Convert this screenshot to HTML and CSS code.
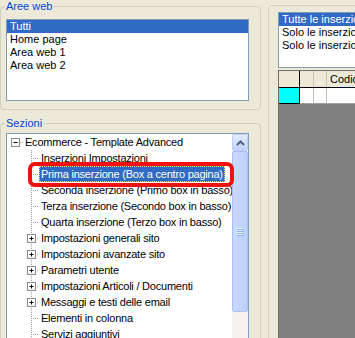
FILE: index.html
```html
<!DOCTYPE html>
<html lang="it">
<head>
<meta charset="UTF-8">
<meta name="viewport" content="width=device-width, initial-scale=1.0">
<title>Sezioni</title>
<link rel="stylesheet" href="styles.css">
</head>
<body>

<svg class="defs" width="0" height="0">
  <symbol id="root-minus" viewBox="0 0 16 16">
    <path d="M13 8.5H16" stroke="#a0a0a0" stroke-dasharray="1 1"/>
    <rect x="4.5" y="4.5" width="8" height="8" fill="#fff" stroke="#8a8a8a"/>
    <path d="M6.5 8.5H10.5" stroke="#000"/>
  </symbol>
  <symbol id="leaf" viewBox="0 0 16 16">
    <path d="M8.5 0V16M10 8.5H16" stroke="#a0a0a0" stroke-dasharray="1 1"/>
  </symbol>
  <symbol id="plus" viewBox="0 0 16 16">
    <path d="M8.5 0V16M10 8.5H16" stroke="#a0a0a0" stroke-dasharray="1 1"/>
    <rect x="4.5" y="4.5" width="8" height="8" fill="#fff" stroke="#8a8a8a"/>
    <path d="M6.5 8.5H10.5M8.5 6.5V10.5" stroke="#000"/>
  </symbol>
</svg>

<div class="window">
  <div class="left">
    <fieldset class="group group-web">
      <legend>Aree web</legend>
      <div class="listbox web-list">
        <div class="item selected">Tutti</div>
        <div class="item">Home page</div>
        <div class="item">Area web 1</div>
        <div class="item">Area web 2</div>
      </div>
    </fieldset>

    <fieldset class="group group-sections">
      <legend>Sezioni</legend>
      <div class="tree">
        <div class="tree-items">
          <div class="node"><svg class="twig"><use href="#root-minus"/></svg><span class="label">Ecommerce - Template Advanced</span></div>
          <div class="node child"><svg class="twig"><use href="#leaf"/></svg><span class="label">Inserzioni Impostazioni</span></div>
          <div class="node child"><svg class="twig"><use href="#leaf"/></svg><span class="label selected">Prima inserzione (Box a centro pagina)</span></div>
          <div class="node child"><svg class="twig"><use href="#leaf"/></svg><span class="label">Seconda inserzione (Primo box in basso)</span></div>
          <div class="node child"><svg class="twig"><use href="#leaf"/></svg><span class="label">Terza inserzione (Secondo box in basso)</span></div>
          <div class="node child"><svg class="twig"><use href="#leaf"/></svg><span class="label">Quarta inserzione (Terzo box in basso)</span></div>
          <div class="node child"><svg class="twig"><use href="#plus"/></svg><span class="label">Impostazioni generali sito</span></div>
          <div class="node child"><svg class="twig"><use href="#plus"/></svg><span class="label">Impostazioni avanzate sito</span></div>
          <div class="node child"><svg class="twig"><use href="#plus"/></svg><span class="label">Parametri utente</span></div>
          <div class="node child"><svg class="twig"><use href="#plus"/></svg><span class="label">Impostazioni Articoli / Documenti</span></div>
          <div class="node child"><svg class="twig"><use href="#plus"/></svg><span class="label">Messaggi e testi delle email</span></div>
          <div class="node child"><svg class="twig"><use href="#leaf"/></svg><span class="label">Elementi in colonna</span></div>
          <div class="node child"><svg class="twig"><use href="#leaf"/></svg><span class="label">Servizi aggiuntivi</span></div>
        </div>
        <div class="scrollbar">
          <div class="sb-up">
            <svg width="9" height="6" viewBox="0 0 9 6"><path d="M1 5L4.5 1.5L8 5" fill="none" stroke="#4d6185" stroke-width="2"/></svg>
          </div>
          <div class="sb-thumb">
            <svg width="8" height="8" viewBox="0 0 8 8">
              <path d="M0 0.5H7M0 2.5H7M0 4.5H7M0 6.5H7" stroke="#eef3fe"/>
              <path d="M1 1.5H8M1 3.5H8M1 5.5H8M1 7.5H8" stroke="#8cb0f8"/>
            </svg>
          </div>
          <div class="sb-track"></div>
        </div>
      </div>
    </fieldset>
  </div>

  <div class="right">
    <div class="listbox filter-list">
      <div class="item selected">Tutte le inserzioni</div>
      <div class="item">Solo le inserzioni attive</div>
      <div class="item">Solo le inserzioni non attive</div>
    </div>
    <div class="grid">
      <div class="grid-head">
        <div class="cell corner"></div>
        <div class="cell narrow"></div>
        <div class="cell narrow second"></div>
        <div class="cell wide">Codice</div>
      </div>
      <div class="grid-row">
        <div class="cell rowhead"></div>
        <div class="cell narrow"></div>
        <div class="cell narrow second"></div>
        <div class="cell wide"></div>
      </div>
    </div>
  </div>
</div>

<div class="callout"></div>

</body>
</html>
```

FILE: styles.css
```css
body {
  margin: 0;
  width: 355px;
  height: 338px;
  overflow: hidden;
  background-color: #ece9d8;
  font-family: "Liberation Sans", Arial, sans-serif;
  font-size: 11px;
  color: #000;
  position: relative;
}

.defs {
  position: absolute;
  width: 0;
  height: 0;
}

.window {
  display: flex;
  gap: 7px;
}

.left {
  width: 261px;
  flex-shrink: 0;
}

/* group boxes */
.group {
  margin: 0;
  border: 1px solid #d0d0bf;
  border-radius: 4px;
  min-inline-size: 0;
  box-sizing: border-box;
}

.group legend {
  color: #0046d5;
  line-height: 13px;
  padding: 0 1px;
  margin-left: -1px;
}

.group-web {
  height: 110px;
  padding: 6px 11px 8px 5px;
}

.group-sections {
  margin-top: 7px;
  height: 260px;
  padding: 3px 11px 0 5px;
}

/* list boxes */
.listbox {
  background-color: #fff;
  border: 1px solid #7f9db9;
  box-sizing: border-box;
}

.web-list {
  height: 82px;
}

.item {
  height: 13px;
  line-height: 13px;
  padding-left: 3px;
  white-space: nowrap;
}

.item.selected {
  background-color: #316ac5;
  color: #fff;
}

/* tree */
.tree {
  display: flex;
  height: 230px;
  background-color: #fff;
  border: 1px solid #7f9db9;
  box-sizing: border-box;
}

.tree-items {
  flex: 1;
  overflow: hidden;
}

.node {
  display: flex;
  height: 16px;
  white-space: nowrap;
}

.node.child {
  padding-left: 16px;
}

.twig {
  width: 16px;
  height: 16px;
  flex-shrink: 0;
}

.label {
  line-height: 16px;
  padding: 0 2px;
  letter-spacing: -0.22px;
}

.label.selected {
  background-color: #316ac5;
  color: #fff;
  outline: 1px dotted #e8d89a;
  outline-offset: -1px;
}

/* scrollbar */
.scrollbar {
  width: 16px;
  flex-shrink: 0;
  display: flex;
  flex-direction: column;
  background-color: #f5f4ee;
}

.sb-up {
  height: 17px;
  box-sizing: border-box;
  border: 1px solid #bccdf6;
  border-radius: 2px;
  background: linear-gradient(#e3ebfd, #c4d4fa);
  display: flex;
  align-items: center;
  justify-content: center;
}

.sb-thumb {
  height: 161px;
  box-sizing: border-box;
  border: 1px solid #a9c0f3;
  border-radius: 2px;
  background: linear-gradient(90deg, #cbd9fc, #bdd0fa);
  display: flex;
  align-items: center;
  justify-content: center;
}

.sb-track {
  flex: 1;
}

/* right panel */
.right {
  width: 200px;
  flex-shrink: 0;
  margin-top: 5px;
  height: 340px;
  border: 1px solid #d0d0bf;
  border-radius: 4px;
  padding: 6px 0 0 9px;
  box-sizing: border-box;
}

.filter-list {
  height: 56px;
  width: 240px;
}

.grid {
  margin-top: 2px;
  height: 280px;
  width: 240px;
  background-color: #808080;
  border-left: 1px solid #716f64;
  border-top: 1px solid #716f64;
}

.grid-head {
  display: flex;
  height: 17px;
  background-color: #ece9d8;
  border-bottom: 1px solid #000;
  box-sizing: border-box;
}

.grid-row {
  display: flex;
  height: 16px;
  background-color: #fff;
  box-sizing: border-box;
}

.cell {
  box-sizing: border-box;
  height: 100%;
}

.corner,
.rowhead {
  width: 21px;
  border-right: 1px solid #000;
}

.rowhead {
  background-color: #00ffff;
  border-bottom: 1px solid #000;
}

.narrow {
  width: 14px;
  border-right: 1px solid #c8c5b8;
}

.narrow.second {
  width: 13px;
}

.wide {
  width: 150px;
  padding-left: 3px;
  line-height: 16px;
}

.grid-row .wide,
.grid-row .narrow {
  border-bottom: 1px solid #a0a0a0;
}

/* annotation */
.callout {
  position: absolute;
  left: 28px;
  top: 162px;
  width: 206px;
  height: 25px;
  box-sizing: border-box;
  border: 4px solid #f0100e;
  border-radius: 7px;
}
```
